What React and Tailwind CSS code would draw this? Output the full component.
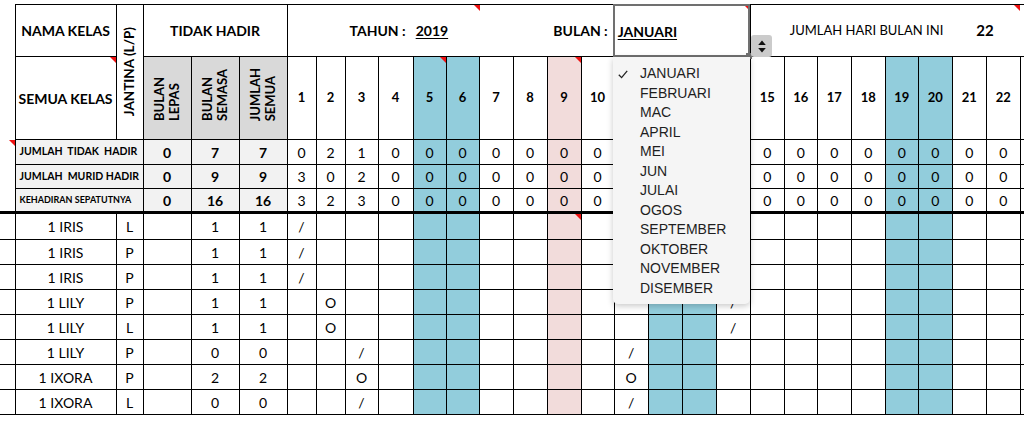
import React from 'react'

const DAY_W = [29, 29, 33, 35, 33, 33, 34, 34, 34, 33, 34, 34, 34, 34, 34, 33, 34, 34, 33, 34, 34, 34, 34]
const W_CLASS = { 29: 'w-[29px]', 33: 'w-[33px]', 34: 'w-[34px]', 35: 'w-[35px]' }
const DAYS = DAY_W.map((_, i) => i + 1)
const BLUE = [5, 6, 12, 13, 19, 20]
const PINK = [9]
// days covered by the open dropdown in the header rows, and the clipped last column
const HIDDEN = [11, 12, 13, 14, 23]

const MONTHS = [
  'JANUARI', 'FEBRUARI', 'MAC', 'APRIL', 'MEI', 'JUN',
  'JULAI', 'OGOS', 'SEPTEMBER', 'OKTOBER', 'NOVEMBER', 'DISEMBER',
]

const SUMMARY = [
  { label: 'JUMLAH  TIDAK  HADIR', size: 'text-[10.5px]', vals: [0, 7, 7], days: [0, 2, 1], h: 'h-[25px]' },
  { label: 'JUMLAH  MURID HADIR', size: 'text-[10.5px]', vals: [0, 9, 9], days: [3, 0, 2], h: 'h-[24px]' },
  { label: 'KEHADIRAN SEPATUTNYA', size: 'text-[9px]', vals: [0, 16, 16], days: [3, 2, 3], h: 'h-[24px]' },
]

const STUDENTS = [
  { name: '1 IRIS', g: 'L', a: 1, b: 1, marks: { 1: '/' }, h: 'h-[27px]' },
  { name: '1 IRIS', g: 'P', a: 1, b: 1, marks: { 1: '/' }, h: 'h-[25px]' },
  { name: '1 IRIS', g: 'P', a: 1, b: 1, marks: { 1: '/' }, h: 'h-[25px]' },
  { name: '1 LILY', g: 'P', a: 1, b: 1, marks: { 2: 'O', 14: '/' }, h: 'h-[25px]' },
  { name: '1 LILY', g: 'L', a: 1, b: 1, marks: { 2: 'O', 14: '/' }, h: 'h-[25px]' },
  { name: '1 LILY', g: 'P', a: 0, b: 0, marks: { 3: '/', 11: '/' }, h: 'h-[25px]' },
  { name: '1 IXORA', g: 'P', a: 2, b: 2, marks: { 3: 'O', 11: 'O' }, h: 'h-[25px]' },
  { name: '1 IXORA', g: 'L', a: 0, b: 0, marks: { 3: '/', 11: '/' }, h: 'h-[25px]' },
]

function dayBg(d) {
  if (BLUE.includes(d)) return 'bg-[#92cddc]'
  if (PINK.includes(d)) return 'bg-[#f2dcdb]'
  return 'bg-white'
}

function Flag({ className = '' }) {
  return (
    <span className={`absolute top-0 w-0 h-0 border-t-[6px] border-l-[6px] border-t-[#ee1111] border-l-transparent ${className || 'right-0'}`} />
  )
}

const cell = 'border border-black p-0'

export default function App() {
  return (
    <div className="relative w-[1024px] h-[427px] overflow-hidden bg-white pt-[4px] [font-family:Lato,sans-serif] text-black">
      <table className="table-fixed border-collapse w-[1054px]">
        <colgroup>
          <col className="w-[15px]" />
          <col className="w-[101px]" />
          <col className="w-[27px]" />
          <col className="w-[48px]" />
          <col className="w-[48px]" />
          <col className="w-[48px]" />
          {DAY_W.map((w, i) => (
            <col key={i} className={W_CLASS[w]} />
          ))}
        </colgroup>
        <tbody>
          <tr className="h-[52px]">
            <td className="p-0" />
            <td className={`${cell} text-center font-bold text-[14px]`}>NAMA KELAS</td>
            <td rowSpan={2} className={`${cell} text-center`}>
              <div className="flex justify-center">
                <span className="[writing-mode:vertical-rl] rotate-180 font-bold text-[13.5px] leading-none">JANTINA (L/P)</span>
              </div>
            </td>
            <td colSpan={3} className={`${cell} text-center font-bold text-[14px]`}>TIDAK HADIR</td>
            <td colSpan={10} className={`${cell} relative`}>
              <Flag className="left-[186px]" />
              <div className="flex items-center font-bold text-[14px] pl-[62px] pr-[6px]">
                <span>TAHUN :</span>
                <span className="ml-[10px] underline underline-offset-2">2019</span>
                <span className="ml-auto">BULAN :</span>
              </div>
            </td>
            <td colSpan={4} className={`${cell} relative`}>
              <Flag />
              <span className="pl-[3px] font-bold text-[14px] underline underline-offset-2">JANUARI</span>
            </td>
            <td colSpan={9} className="border-y border-black p-0 relative">
              <Flag className="left-[263px]" />
              <div className="flex items-center pl-[39px]">
                <span className="text-[13px]">JUMLAH HARI BULAN INI</span>
                <span className="ml-[33px] font-bold text-[15px]">22</span>
              </div>
            </td>
          </tr>
          <tr className="h-[83px]">
            <td className="p-0" />
            <td className={`${cell} relative text-center font-bold text-[14px]`}>
              <Flag />
              SEMUA KELAS
            </td>
            {[['BULAN', 'LEPAS'], ['BULAN', 'SEMASA'], ['JUMLAH', 'SEMUA']].map(([a, b], i) => (
              <td key={i} className={`${cell} bg-[#d9d9d9] align-bottom`}>
                <div className="flex justify-center pb-[18px]">
                  <span className="[writing-mode:vertical-rl] rotate-180 text-left font-bold text-[13px] leading-[15px]">
                    {a}
                    <br />
                    {b}
                  </span>
                </div>
              </td>
            ))}
            {DAYS.map((d) => (
              <td key={d} className={`${cell} ${dayBg(d)} relative text-center font-bold text-[13px]`}>
                {(d === 5 || d === 9) && <Flag />}
                {HIDDEN.includes(d) ? '' : d}
              </td>
            ))}
          </tr>
          {SUMMARY.map((row, r) => (
            <tr key={r} className={row.h}>
              {r === 0 && (
                <td rowSpan={3} className="p-0 relative border-b-[3px] border-black">
                  <Flag className="right-0 top-0" />
                </td>
              )}
              <td
                colSpan={2}
                className={`${cell} ${r === 2 ? 'border-b-[3px]' : ''} bg-[#f2f2f2] pl-[4px] font-bold whitespace-pre ${row.size}`}
              >
                {row.label}
              </td>
              {row.vals.map((v, i) => (
                <td key={i} className={`${cell} ${r === 2 ? 'border-b-[3px]' : ''} bg-[#f2f2f2] text-center font-bold text-[14px]`}>
                  {v}
                </td>
              ))}
              {DAYS.map((d) => (
                <td key={d} className={`${cell} ${r === 2 ? 'border-b-[3px]' : ''} ${dayBg(d)} text-center text-[14px]`}>
                  {HIDDEN.includes(d) ? '' : row.days[d - 1] ?? 0}
                </td>
              ))}
            </tr>
          ))}
          {STUDENTS.map((s, r) => (
            <tr key={r} className={s.h}>
              <td className="border-y border-black p-0" />
              <td className={`${cell} text-center text-[14px]`}>{s.name}</td>
              <td className={`${cell} text-center text-[14px]`}>{s.g}</td>
              <td className={cell} />
              <td className={`${cell} text-center text-[14px]`}>{s.a}</td>
              <td className={`${cell} text-center text-[14px]`}>{s.b}</td>
              {DAYS.map((d) => (
                <td key={d} className={`${cell} ${dayBg(d)} relative text-center text-[14px]`}>
                  {r === 0 && d === 9 && <Flag />}
                  {s.marks[d] || ''}
                </td>
              ))}
            </tr>
          ))}
        </tbody>
      </table>

      {/* selected cell outline + fill handle */}
      <div className="absolute left-[613px] top-[4px] w-[137px] h-[53px] border-2 border-[#707070] pointer-events-none" />
      <div className="absolute left-[746px] top-[53px] w-[6px] h-[6px] bg-[#707070]" />

      {/* select stepper */}
      <div className="absolute left-[751px] top-[35px] w-[21px] h-[22px] rounded-[3px] bg-[#cbcbcb] flex items-center justify-center">
        <svg width="8" height="13" viewBox="0 0 8 13">
          <path d="M4 0.5 L7.8 5 H0.2 Z" fill="#111" />
          <path d="M0.2 8 H7.8 L4 12.5 Z" fill="#111" />
        </svg>
      </div>

      {/* open dropdown */}
      <div className="absolute left-[613px] top-[57px] w-[137px] h-[247px] rounded-b-[5px] bg-[#f5f5f5] shadow-[0_2px_6px_rgba(0,0,0,0.22)] pt-[7px] [font-family:'Liberation_Sans',Arial,sans-serif] text-[14px] text-[#1e1e1e]">
        {MONTHS.map((m, i) => (
          <div key={m} className="relative h-[19.5px] leading-[19.5px] pl-[27px]">
            {i === 0 && (
              <svg className="absolute left-[5px] top-[6px]" width="10" height="9" viewBox="0 0 10 9">
                <path d="M0.8 4.8 L3.6 7.6 L9.2 0.8" fill="none" stroke="#222" strokeWidth="1.3" />
              </svg>
            )}
            {m}
          </div>
        ))}
      </div>
    </div>
  )
}
